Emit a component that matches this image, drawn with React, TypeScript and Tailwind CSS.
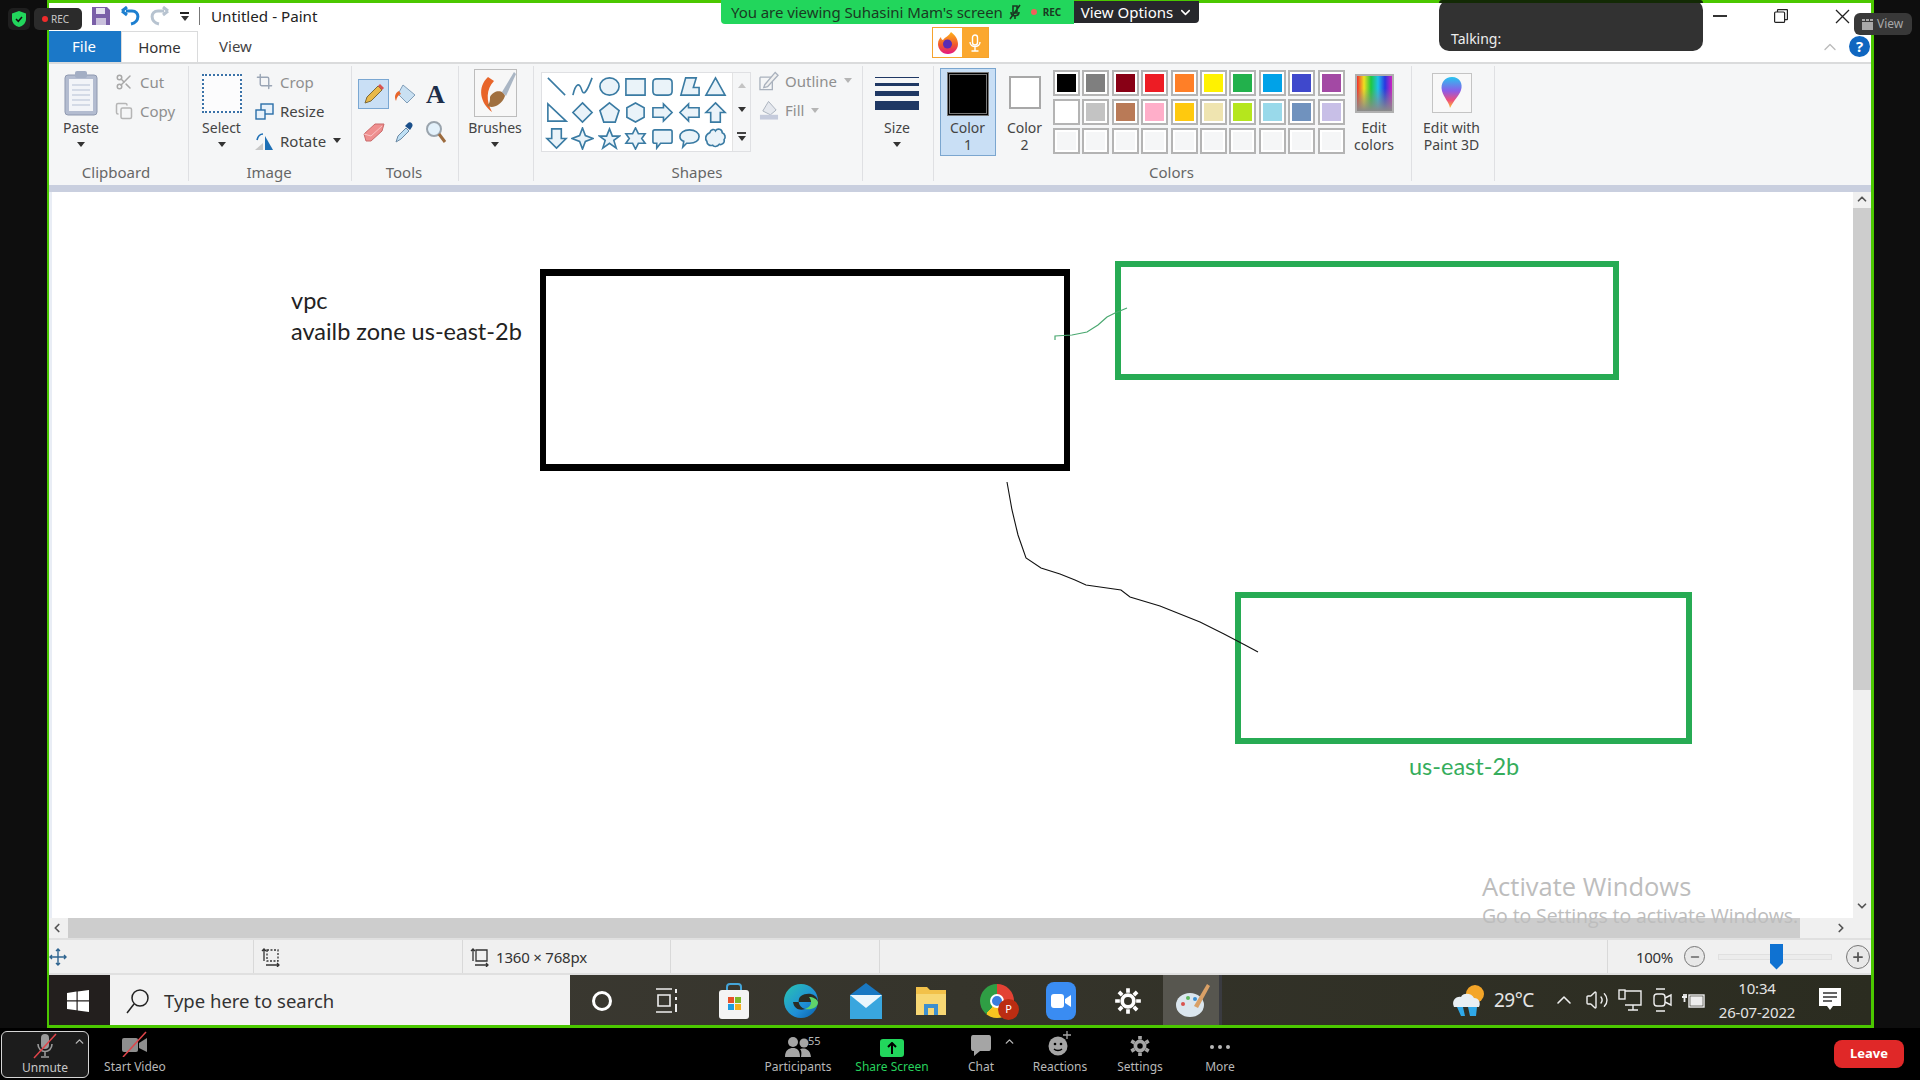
import { ChevronDown, ChevronLeft, ChevronRight, ChevronUp, Copy, Crop, Minus, Plus, Scissors, Volume2 } from 'lucide-react';
import type { ReactNode } from 'react';

const shapePaths = [
  'M3 3L21 21',
  'M2 21C5 8 9 8 11 15S16 19 22 3',
  'M12 3C17.5 3 22 7 22 12S17.5 21 12 21S2 17 2 12S6.5 3 12 3Z',
  'M2 4H22V21H2Z',
  'M6 4H18Q22 4 22 8V17Q22 21 18 21H6Q2 21 2 17V8Q2 4 6 4Z',
  'M3 21L8 3H19L16 13H22V21Z',
  'M12 3L22 21H2Z',
  'M3 3V21H22Z',
  'M12 2L22 12L12 22L2 12Z',
  'M12 2L22 10L18 22H6L2 10Z',
  'M12 2L21 7V17L12 22L3 17V7Z',
  'M2 7H13V3L22 12L13 21V17H2Z',
  'M22 7H11V3L2 12L11 21V17H22Z',
  'M12 2L22 12H17V22H7V12H2Z',
  'M12 22L22 12H17V2H7V12H2Z',
  'M12 1L15 9L23 12L15 15L12 23L9 15L1 12L9 9Z',
  'M12 2L15 9.5H22.5L16.5 14L19 22L12 17L5 22L7.5 14L1.5 9.5H9Z',
  'M12 1L15 7H22L18.5 12L22 17H15L12 23L9 17H2L5.5 12L2 7H9Z',
  'M4 3H20Q22 3 22 5V15Q22 17 20 17H10L6 22V17H4Q2 17 2 15V5Q2 3 4 3Z',
  'M12 3C18 3 22 6 22 10S18 17 12 17C11 17 10 17 9 17L5 21L6 15C3 14 2 12 2 10C2 6 6 3 12 3Z',
  'M6 6C7 2 11 2 12 4C14 1 19 2 19 6C22 7 23 11 21 13C22 17 18 19 16 18C14 21 10 21 9 19C6 20 3 18 3 15C1 13 1 8 6 6Z',
];

const paletteRows = [
  ['#000000', '#7f7f7f', '#880015', '#ed1c24', '#ff7f27', '#fff200', '#22b14c', '#00a2e8', '#3f48cc', '#a349a4'],
  ['#ffffff', '#c3c3c3', '#b97a57', '#ffaec9', '#ffc90e', '#efe4b0', '#b5e61d', '#99d9ea', '#7092be', '#c8bfe7'],
  ['#f5f6f7', '#f5f6f7', '#f5f6f7', '#f5f6f7', '#f5f6f7', '#f5f6f7', '#f5f6f7', '#f5f6f7', '#f5f6f7', '#f5f6f7'],
];

function Caret({ muted }: { muted?: boolean }) {
  return <div className={`mx-auto h-0 w-0 border-x-[4px] border-t-[5px] border-x-transparent ${muted ? 'border-t-[#b5b5b5]' : 'border-t-[#333]'}`} />;
}

function Group({ className, label, labelClass, children }: { className: string; label?: string; labelClass?: string; children: ReactNode }) {
  return (
    <div className={`flex h-full shrink-0 flex-col border-r border-[#dfe0e3] ${className}`}>
      <div className="min-h-0 flex-1">{children}</div>
      <div className={`h-[16px] text-center text-[15px] leading-[15px] text-[#666] ${labelClass ?? 'pr-[2px]'}`}>{label}</div>
    </div>
  );
}

function BigButton({ className, icon, lines, caret }: { className: string; icon: ReactNode; lines: string[]; caret?: boolean }) {
  return (
    <div className={`flex shrink-0 flex-col items-center ${className}`}>
      <div className="flex h-[52px] items-center justify-center">{icon}</div>
      {lines.map((line) => (
        <div key={line} className="h-[17px] text-[14px] leading-[17px] text-[#444]">{line}</div>
      ))}
      {caret && <div className="pt-[6px]"><Caret /></div>}
    </div>
  );
}

function SmallRow({ icon, text, caret, muted }: { icon: ReactNode; text: string; caret?: boolean; muted?: boolean }) {
  return (
    <div className={`flex h-[29.5px] items-center gap-[6px] text-[15px] ${muted ? 'text-[#8f8f8f]' : 'text-[#444]'}`}>
      <span className="flex w-[20px] justify-center">{icon}</span>
      <span>{text}</span>
      {caret && <span className="ml-[1px]"><Caret muted={muted} /></span>}
    </div>
  );
}

function PaintRibbon() {
  return (
    <div className="flex h-[123px] shrink-0 border-t-2 border-[#dadbdc] bg-[#f5f6f7] pt-[2px] pb-[4px]">
      <Group className="w-[140px]" label="Clipboard" labelClass="pr-[5px]">
        <div className="flex pt-[1px]">
          <BigButton
            className="w-[64px]"
            lines={['Paste']}
            caret
            icon={
              <svg width="36" height="46" viewBox="0 0 36 46">
                <rect x="2" y="5" width="32" height="40" rx="3" fill="#b3bcd0" stroke="#8f99b0" />
                <rect x="6" y="9" width="24" height="32" fill="#f2f4f8" />
                <path d="M9 15H27M9 20H27M9 25H27M9 30H27M9 35H27" stroke="#b5c0d4" />
                <rect x="12" y="1" width="12" height="7" rx="2" fill="#a3aec4" />
              </svg>
            }
          />
          <div className="pl-[1px]">
            <SmallRow muted text="Cut" icon={<Scissors size={18} className="text-[#a8a8a8]" />} />
            <SmallRow muted text="Copy" icon={<Copy size={18} className="text-[#b5b5b5]" />} />
          </div>
        </div>
      </Group>
      <Group className="w-[163px]" label="Image">
        <div className="flex pt-[1px]">
          <div className="w-[65px]">
            <BigButton
              className="w-full"
              lines={['Select']}
              caret
              icon={<div className="h-[39px] w-[40px] border-2 border-dotted border-[#3a72a8] bg-white/70" />}
            />
          </div>
          <div>
            <SmallRow muted text="Crop" icon={<Crop size={17} className="text-[#9aa5b5]" />} />
            <SmallRow
              text="Resize"
              icon={
                <svg width="19" height="19" viewBox="0 0 19 19" fill="#e7f1fa" stroke="#2a6ea8" strokeWidth="1.4">
                  <rect x="6" y="2" width="12" height="10" />
                  <rect x="1" y="8" width="9" height="9" />
                </svg>
              }
            />
            <SmallRow
              text="Rotate"
              caret
              icon={
                <svg width="20" height="20" viewBox="0 0 20 20">
                  <path d="M1 19L9 12V19Z" fill="#c7c7c7" />
                  <path d="M11 5L19 19H11Z" fill="#1d6fb5" />
                  <path d="M3 9C4 5 6 3 9 3" stroke="#1d6fb5" strokeWidth="1.6" fill="none" />
                </svg>
              }
            />
          </div>
        </div>
      </Group>
      <Group className="w-[107px]" label="Tools">
        <div className="grid grid-cols-[31px_31px_31px] content-start gap-y-[8px] pl-[6px] pt-[13px]">
          <div className="flex h-[30px] items-center justify-center border border-[#7aa7d2] bg-[#c9dff5]">
            <svg width="22" height="22" viewBox="0 0 22 22">
              <path d="M2 20L4 14L15 3L19 7L8 18Z" fill="#e9b949" stroke="#7d6a3a" />
              <path d="M15 3L17 1L21 5L19 7Z" fill="#d9534f" />
            </svg>
          </div>
          <div className="flex h-[30px] items-center justify-center">
            <svg width="24" height="24" viewBox="0 0 24 24">
              <path d="M10 3L22 13L14 21L5 12Z" fill="#c9e0f2" stroke="#7f9db8" />
              <path d="M6 9C2 11 1 15 3 19C4 15 5 13 8 12Z" fill="#e8652a" />
            </svg>
          </div>
          <div className="flex h-[30px] items-center justify-center font-['Liberation_Serif',serif] text-[26px] font-bold text-[#1d2e4a]">A</div>
          <div className="flex h-[30px] items-center justify-center">
            <svg width="24" height="22" viewBox="0 0 24 22">
              <path d="M2 13L13 3H22L20 10L9 20H4Z" fill="#ef8f8f" stroke="#c96a6a" />
              <path d="M2 13L9 15L20 5" fill="none" stroke="#f8c4c4" />
            </svg>
          </div>
          <div className="flex h-[30px] items-center justify-center">
            <svg width="22" height="24" viewBox="0 0 22 24">
              <path d="M2 22L4 16L12 8L15 11L7 19Z" fill="#bfe0f5" stroke="#6b8aa5" />
              <path d="M11 6L14 3C16 1 20 4 18 7L16 10Z" fill="#1b4f8a" />
            </svg>
          </div>
          <div className="flex h-[30px] items-center justify-center">
            <svg width="22" height="24" viewBox="0 0 22 24" fill="none">
              <circle cx="9" cy="9" r="7" stroke="#9aa4ad" strokeWidth="2" fill="#e3f1fb" />
              <path d="M14 14L20 22" stroke="#9c6b3e" strokeWidth="3" />
            </svg>
          </div>
        </div>
      </Group>
      <Group className="w-[75px]">
        <div className="pt-[1px] pr-[2px]">
          <BigButton
            className="w-full"
            lines={['Brushes']}
            caret
            icon={
              <svg width="43" height="48" viewBox="0 0 43 48">
                <rect x="0.5" y="0.5" width="42" height="47" fill="#f7f7f7" stroke="#bdbdbd" />
                <path d="M14 8C3 18 6 34 18 43C12 32 12 20 20 12Z" fill="#e8652a" />
                <path d="M16 28C20 20 30 21 31 27C27 38 16 40 13 36C16 35 16 31 16 28Z" fill="#a07040" />
                <path d="M28 23L40 3L42 5L32 27Z" fill="#aab6c4" />
              </svg>
            }
          />
        </div>
      </Group>
      <Group className="w-[329px]" label="Shapes">
        <div className="flex pl-[7px] pt-[6px]">
          <div className="flex h-[80px] w-[210px] border border-[#dfe0e3] bg-white">
            <div className="grid w-[190px] grid-cols-7 place-items-center pl-[1px] pr-[3px]">
              {shapePaths.map((d) => (
                <svg key={d} width="23" height="23" viewBox="0 0 24 24" fill={d.length < 12 ? 'none' : '#eaf3f9'} stroke="#3a7ba3" strokeWidth="1.7">
                  <path d={d} fill={d.startsWith('M2 21C') ? 'none' : undefined} />
                </svg>
              ))}
            </div>
            <div className="flex flex-1 flex-col items-center justify-around border-l border-[#e3e3e3] bg-[#f5f6f7] text-[#555]">
              <div className="h-0 w-0 border-x-[4px] border-b-[5px] border-x-transparent border-b-[#c4c4c4]" />
              <Caret />
              <div className="flex flex-col items-center gap-[2px]">
                <div className="h-[2px] w-[9px] bg-[#444]" />
                <Caret />
              </div>
            </div>
          </div>
          <div className="-mt-[6px] pl-[8px]">
            <SmallRow
              muted
              text="Outline"
              caret
              icon={
                <svg width="21" height="21" viewBox="0 0 21 21" fill="none" stroke="#a9b1bd" strokeWidth="1.4">
                  <path d="M1 7H13M1 7V20H14V10" />
                  <path d="M6 15L17 2L20 5L9 17L5 18Z" fill="#f0f0f0" />
                </svg>
              }
            />
            <SmallRow
              muted
              text="Fill"
              caret
              icon={
                <svg width="21" height="21" viewBox="0 0 21 21">
                  <path d="M10 1L18 10L12 15L4 11Z" fill="#e5e8ee" stroke="#a9b1bd" />
                  <rect x="1" y="15" width="19" height="5" fill="#c5cbdc" />
                </svg>
              }
            />
          </div>
        </div>
      </Group>
      <Group className="w-[71px]">
        <div className="flex flex-col items-center pr-[2px] pt-[1px]">
          <div className="flex h-[52px] w-[44px] flex-col justify-center gap-[5px]">
            <div className="h-[1px] bg-[#1f3864]" />
            <div className="h-[3px] bg-[#1f3864]" />
            <div className="h-[5px] bg-[#1f3864]" />
            <div className="h-[9px] bg-[#1f3864]" />
          </div>
          <div className="h-[17px] text-[14px] leading-[17px] text-[#444]">Size</div>
          <div className="pt-[6px]"><Caret /></div>
        </div>
      </Group>
      <Group className="w-[478px]" label="Colors">
        <div className="flex pl-[6px] pt-[2px]">
          <div className="h-[88px] w-[56px] shrink-0 border border-[#7ba6cf] bg-[#c9dff5] pt-[3px] text-center">
            <div className="mx-auto h-[44px] w-[42px] border-[3px] border-double border-[#777] bg-black" />
            <div className="mt-[3px] pr-[1px] text-[14px] leading-[17px] text-[#444]">Color</div>
            <div className="text-[14px] leading-[17px] text-[#444]">1</div>
          </div>
          <div className="w-[57px] shrink-0 pt-[8px] text-center">
            <div className="mx-auto h-[33px] w-[32px] border-2 border-[#a8a8a8] bg-white" />
            <div className="mt-[10px] text-[14px] leading-[17px] text-[#444]">Color</div>
            <div className="text-[14px] leading-[17px] text-[#444]">2</div>
          </div>
          <div className="flex w-[294px] shrink-0 flex-col gap-[3px] pt-[2px]">
            {paletteRows.map((row, r) => (
              <div key={r} className="flex gap-[2.4px]">
                {row.map((c, i) => (
                  <div key={i} className="h-[26px] w-[27px] border-2 border-[#b4b4b4] bg-white p-[2px]">
                    <div className="h-full w-full" style={{ backgroundColor: c }} />
                  </div>
                ))}
              </div>
            ))}
          </div>
          <div className="-ml-[3px] flex w-[60px] shrink-0 flex-col items-center">
            <div className="flex h-[51px] items-center justify-center">
              <div className="relative h-[39px] w-[39px] border-2 border-[#b0b0b0] bg-[linear-gradient(90deg,#f03030,#f0e020,#20c840,#20c0e8,#2838e0,#d020c0)]">
                <div className="absolute inset-0 bg-[linear-gradient(180deg,transparent_35%,#8a8a8a)]" />
              </div>
            </div>
            <div className="h-[17px] text-[14px] leading-[17px] text-[#444]">Edit</div>
            <div className="h-[17px] text-[14px] leading-[17px] text-[#444]">colors</div>
          </div>
        </div>
      </Group>
      <Group className="w-[83px]">
        <div className="pr-[3px] pt-[1px]">
          <BigButton
            className="w-full"
            lines={['Edit with', 'Paint 3D']}
            icon={
              <svg width="40" height="40" viewBox="0 0 40 40">
                <defs>
                  <linearGradient id="p3d" x1="0" y1="0" x2="0" y2="1">
                    <stop offset="0" stopColor="#27c5f0" />
                    <stop offset="0.45" stopColor="#8b5ce8" />
                    <stop offset="0.75" stopColor="#ee4f7c" />
                    <stop offset="1" stopColor="#fbc02d" />
                  </linearGradient>
                </defs>
                <rect x="0.5" y="0.5" width="39" height="39" fill="#f8f8f8" stroke="#c4c4c4" />
                <path d="M20 4C28 4 31 11 29 17C27 23 22 27 18 35C17 29 12 25 10 18C8 10 13 4 20 4Z" fill="url(#p3d)" />
              </svg>
            }
          />
        </div>
      </Group>
    </div>
  );
}

function Canvas() {
  return (
    <div className="relative flex h-[746px] shrink-0 flex-col overflow-hidden bg-white">
      <div className="flex min-h-0 flex-1 justify-end">
        <div className="flex w-[18px] flex-col bg-[#f0f0f0] text-[#555]">
          <div className="flex h-[16px] items-start justify-center"><ChevronUp size={14} strokeWidth={3} /></div>
          <div className="h-[482px] bg-[#cdcdcd]" />
          <div className="flex flex-1 items-end justify-center pb-[5px]"><ChevronDown size={14} strokeWidth={3} /></div>
        </div>
      </div>
      <div className="flex h-[20px] shrink-0 items-center bg-[#f0f0f0] text-[#555]">
        <div className="flex w-[19px] justify-center pr-[3px]"><ChevronLeft size={14} strokeWidth={3} /></div>
        <div className="h-full w-[1732px] bg-[#cdcdcd]" />
        <div className="flex flex-1 justify-center pl-[10px]"><ChevronRight size={14} strokeWidth={3} /></div>
      </div>

      {/* drawing on the paint canvas */}
      <div className="absolute left-0 top-0 h-[726px] w-[3px] bg-[#e9edf5]" />
      <div className="absolute left-[242px] top-[93px] font-['Lato',sans-serif] text-[23.5px] leading-[31px] text-[#222]">
        <div>vpc</div>
        <div>availb zone us-east-2b</div>
      </div>
      <div className="absolute left-[491px] top-[77px] h-[202px] w-[530px] border-x-[6px] border-y-[7px] border-black" />
      <div className="absolute left-[1066px] top-[69px] h-[119px] w-[504px] border-[6px] border-[#27ab54]" />
      <div className="absolute left-[1186px] top-[400px] h-[152px] w-[457px] border-[6px] border-[#27ab54]" />
      <div className="absolute left-[1360px] top-[559px] font-['Lato',sans-serif] text-[23.5px] leading-[30px] text-[#35ad5c]">us-east-2b</div>
      <svg className="absolute left-0 top-0" width="1822" height="746" viewBox="49 192 1822 746" fill="none">
        <polyline
          points="1007,482 1012,510 1018,535 1026,558 1041,568 1060,574 1075,580 1086,585 1121,590 1130,597 1160,606 1175,612 1200,622 1224,634 1245,645 1258,652"
          stroke="#111"
          strokeWidth="1.1"
        />
        <polyline
          points="1055,340 1055,336 1072,335 1087,332 1098,325 1107,317 1115,313 1127,308"
          stroke="#4aa870"
          strokeWidth="1.2"
        />
      </svg>

      {/* activation watermark */}
      <div className="absolute left-[1433px] top-[676px] font-['Open_Sans',sans-serif] text-[#bdbdbd]">
        <div className="text-[25.5px] leading-[36px]">Activate Windows</div>
        <div className="text-[19.5px] leading-[24px] tracking-[-0.1px]">Go to Settings to activate Windows.</div>
      </div>
    </div>
  );
}

function StatusBar() {
  return (
    <div className="flex h-[37px] shrink-0 items-center border-y-2 border-[#e0e0e0] bg-[#f0f0f0] text-[15px] text-[#333]">
      <div className="flex h-full w-[205px] items-center border-r border-[#d9d9d9]">
        <svg width="18" height="18" viewBox="0 0 18 18" fill="none" stroke="#2e6490" strokeWidth="1.4">
          <path d="M9 1V17M1 9H17M7 3L9 1L11 3M7 15L9 17L11 15M3 7L1 9L3 11M15 7L17 9L15 11" />
        </svg>
      </div>
      <div className="flex h-full w-[209px] items-center border-r border-[#d9d9d9] pl-[7px]">
        <svg width="20" height="20" viewBox="0 0 20 20" fill="none" stroke="#333" strokeWidth="1.3">
          <path d="M6 3H17V14H6Z" strokeDasharray="2 1.5" />
          <path d="M3 2V14M1 4L3 2L5 4M5 18H18M16 16L18 18L16 20" />
        </svg>
      </div>
      <div className="flex h-full w-[208px] items-center gap-[6px] border-r border-[#d9d9d9] pl-[7px]">
        <svg width="20" height="20" viewBox="0 0 20 20" fill="none" stroke="#333" strokeWidth="1.3">
          <path d="M6 3H17V14H6Z" />
          <path d="M3 2V14M1 4L3 2L5 4M5 18H18M16 16L18 18L16 20" />
        </svg>
        <span className="pt-[1px] text-[15px] tracking-[-0.2px]">1360 × 768px</span>
      </div>
      <div className="h-full w-[209px] border-r border-[#d9d9d9]" />
      <div className="h-full w-[728px] border-r border-[#d9d9d9]" />
      <div className="flex h-full flex-1 items-center">
        <span className="ml-[28px] w-[40px] pt-[1px] text-[15px] tracking-[-0.3px]">100%</span>
        <div className="ml-[8px] flex h-[21px] w-[21px] items-center justify-center rounded-full border border-[#777] bg-[#e8e8e8]">
          <Minus size={12} strokeWidth={3} className="text-[#666]" />
        </div>
        <div className="relative ml-[13px] h-[6px] w-[114px] border border-[#e0e0e0] bg-[#ececec]">
          <div className="absolute left-[51px] top-[-11px] h-[26px] w-[13px] bg-[#0f72d2] [clip-path:polygon(0_0,100%_0,100%_75%,50%_100%,0_75%)]" />
        </div>
        <div className="ml-[14px] flex h-[24px] w-[24px] items-center justify-center rounded-full border border-[#777] bg-[#e8e8e8]">
          <Plus size={14} strokeWidth={3} className="text-[#555]" />
        </div>
      </div>
    </div>
  );
}

function TaskIcon({ className, children }: { className: string; children: ReactNode }) {
  return <div className={`flex h-full shrink-0 items-center justify-center pt-[1px] ${className}`}>{children}</div>;
}

function Taskbar() {
  return (
    <div className="flex h-[50px] shrink-0 items-center bg-[linear-gradient(90deg,#3f3c36,#2b2c20)] text-white">
      <TaskIcon className="w-[61px] bg-[#231f1e] pr-[4px]">
        <svg width="22" height="22" viewBox="0 0 22 22" fill="#fff">
          <path d="M0 3L9.5 1.6V10.3H0ZM10.7 1.4L22 0V10.3H10.7ZM0 11.5H9.5V20.3L0 19ZM10.7 11.5H22V22L10.7 20.5Z" />
        </svg>
      </TaskIcon>
      <div className="flex h-full w-[460px] shrink-0 items-center gap-[14px] bg-[#f2f2f2] pl-[16px] pt-[1px] text-[#333]">
        <svg width="24" height="26" viewBox="0 0 24 26" fill="none" stroke="#222" strokeWidth="1.5">
          <circle cx="14" cy="10" r="8" />
          <path d="M8 16L1 25" />
        </svg>
        <span className="text-[18.5px]">Type here to search</span>
      </div>
      <TaskIcon className="ml-[12px] w-[40px]"><div className="h-[20px] w-[20px] rounded-full border-[3px] border-white" /></TaskIcon>
      <TaskIcon className="ml-[25px] w-[40px]">
        <svg width="24" height="26" viewBox="0 0 24 26" fill="none" stroke="#eee" strokeWidth="1.6">
          <path d="M1 1H17M3 7H15V18H3ZM1 24H17" />
          <path d="M21 1V5M21 9V12M21 16V24" strokeWidth="2" />
        </svg>
      </TaskIcon>
      <TaskIcon className="ml-[27px] w-[40px]">
        <svg width="32" height="38" viewBox="0 0 32 38">
          <path d="M9 9V5Q9 2 12 2H20Q23 2 23 5V9" fill="none" stroke="#45a5d8" strokeWidth="2" />
          <rect x="1" y="8" width="30" height="29" rx="3" fill="#f4f4f4" />
          <rect x="10" y="15" width="6" height="6" fill="#e8512a" />
          <rect x="17" y="15" width="6" height="6" fill="#7fb82a" />
          <rect x="10" y="22" width="6" height="6" fill="#1f9de0" />
          <rect x="17" y="22" width="6" height="6" fill="#f6b01d" />
        </svg>
      </TaskIcon>
      <TaskIcon className="ml-[27px] w-[40px]">
        <svg width="36" height="38" viewBox="0 0 36 38">
          <defs>
            <linearGradient id="edge" x1="0" y1="0" x2="1" y2="1">
              <stop offset="0" stopColor="#2ac4b0" />
              <stop offset="0.6" stopColor="#1f8fd8" />
              <stop offset="1" stopColor="#0a5fa8" />
            </linearGradient>
          </defs>
          <circle cx="18" cy="19" r="17" fill="url(#edge)" />
          <path d="M35 20C34 11 24 10 18 14C14 17 15 25 22 27C17 29 11 27 10 20" fill="#2b2c25" />
          <path d="M35 20C35 26 28 28 22 27C28 25 30 20 26 15C30 15 34 17 35 20Z" fill="#5fd36a" />
        </svg>
      </TaskIcon>
      <TaskIcon className="ml-[25px] w-[40px]">
        <svg width="34" height="38" viewBox="0 0 34 38">
          <path d="M17 1L33 13H1Z" fill="#1978c2" />
          <rect x="1" y="13" width="32" height="24" fill="#39a6de" />
          <path d="M1 13L17 26L33 13" fill="#eaf6fc" />
        </svg>
      </TaskIcon>
      <TaskIcon className="ml-[25px] w-[40px]">
        <svg width="30" height="30" viewBox="0 0 30 30">
          <path d="M0 1H11L14 4H30V29H0Z" fill="#f2c14a" />
          <rect x="0" y="8" width="30" height="21" fill="#f7d774" />
          <path d="M8 18H22V29H18V22H12V29H8Z" fill="#3c8fcf" />
        </svg>
      </TaskIcon>
      <TaskIcon className="relative ml-[26px] w-[40px]">
        <div className="relative h-[34px] w-[34px] rounded-full bg-[conic-gradient(#e34234_0deg_120deg,#f7c520_120deg_220deg,#2f9e44_220deg_360deg)]">
          <div className="absolute left-[10px] top-[10px] h-[14px] w-[14px] rounded-full border-2 border-white bg-[#3b7ddd]" />
        </div>
        <div className="absolute left-[21px] top-[24px] flex h-[21px] w-[21px] items-center justify-center rounded-full bg-[#bb2d12] text-[11px] text-white">P</div>
      </TaskIcon>
      <TaskIcon className="ml-[24px] w-[40px]">
        <div className="flex h-[38px] w-[30px] items-center justify-center rounded-[8px] bg-[#3a8cf2]">
          <svg width="20" height="14" viewBox="0 0 20 14" fill="#fff">
            <rect width="13" height="14" rx="3" />
            <path d="M14 5L20 1V13L14 9Z" />
          </svg>
        </div>
      </TaskIcon>
      <TaskIcon className="ml-[27px] w-[40px]">
        <svg width="28" height="28" viewBox="0 0 24 24" fill="none" stroke="#fff" strokeWidth="3.2">
          <circle cx="12" cy="12" r="5" />
          <path d="M12 1V5M12 19V23M1 12H5M19 12H23M4.2 4.2L7 7M17 17L19.8 19.8M4.2 19.8L7 17M17 7L19.8 4.2" />
        </svg>
      </TaskIcon>
      <TaskIcon className="ml-[15px] w-[59px] border-r-[3px] border-[#3a3b40] bg-[#57564f] pl-[4px]">
        <svg width="36" height="38" viewBox="0 0 36 38">
          <ellipse cx="15" cy="23" rx="14" ry="12" fill="#dbe6ee" />
          <circle cx="8" cy="22" r="2" fill="#d9534f" />
          <circle cx="13" cy="16" r="2" fill="#5cb85c" />
          <circle cx="20" cy="17" r="2" fill="#3b8ed0" />
          <path d="M19 24L32 2L35 4L23 26Z" fill="#d9a066" />
        </svg>
      </TaskIcon>
      <div className="ml-[228px] flex h-full items-center">
        <svg width="36" height="34" viewBox="0 0 36 34">
          <circle cx="25" cy="11" r="9" fill="#f4a528" />
          <path d="M4 24C1 18 6 13 11 14C13 9 22 10 24 15C29 15 31 20 29 24Z" fill="#e8eef3" />
          <path d="M7 24L11 33H15L13 24ZM18 24L20 33H26L27 24Z" fill="#2fa8e8" />
        </svg>
        <span className="ml-[8px] w-[42px] text-[19px] tracking-[-0.5px] text-[#e4e4e4]">29°C</span>
        <ChevronUp size={24} strokeWidth={1.6} className="ml-[16px] text-[#eee]" />
        <Volume2 size={24} strokeWidth={1.4} className="ml-[9px] text-[#eee]" />
        <svg className="ml-[9px]" width="24" height="24" viewBox="0 0 24 24" fill="none" stroke="#eee" strokeWidth="1.4">
          <path d="M7 3H23V17H7M15 17V22M10 22H20" />
          <rect x="1" y="2" width="6" height="9" />
        </svg>
        <svg className="ml-[9px]" width="22" height="26" viewBox="0 0 22 26" fill="none" stroke="#eee" strokeWidth="1.4">
          <rect x="3" y="7" width="11" height="12" rx="3" />
          <path d="M14 11L20 8V18L14 15M5 2H14M5 24H14" />
        </svg>
        <svg className="ml-[8px]" width="24" height="20" viewBox="0 0 24 20" fill="none" stroke="#eee" strokeWidth="1.4">
          <rect x="8" y="5" width="15" height="12" />
          <rect x="10" y="7" width="11" height="8" fill="#eee" />
          <path d="M1 7H6M3 4V7M5 4V7M3.5 7V12" strokeWidth="1.8" />
        </svg>
        <div className="ml-[8px] w-[88px] text-center text-[15px] leading-[24px] tracking-[-0.2px] text-[#e4e4e4]">
          <div>10:34</div>
          <div>26-07-2022</div>
        </div>
        <svg className="ml-[18px]" width="22" height="24" viewBox="0 0 22 24" fill="#fff">
          <path d="M0 0H22V18H14L11 22L8 18H0Z" />
          <path d="M4 5H18M4 9H18M4 13H13" stroke="#333" strokeWidth="1.3" />
        </svg>
      </div>
    </div>
  );
}

function ToolCell({ className, label, labelClass, children }: { className: string; label: string; labelClass?: string; children: ReactNode }) {
  return (
    <div className={`relative flex h-full shrink-0 flex-col items-center ${className}`}>
      <div className="flex h-[29px] items-end justify-center">{children}</div>
      <div className={`mt-[2px] text-[12px] leading-[16px] ${labelClass ?? 'text-[#b8b8b8]'}`}>{label}</div>
    </div>
  );
}

function MeetingToolbar() {
  return (
    <div className="flex h-[52px] shrink-0 items-center bg-black">
      <div className="relative ml-[1px] flex h-[47px] w-[88px] shrink-0 flex-col items-center rounded-[6px] border border-[#d5d5d5] bg-[#1c1c1c]">
        <svg className="mt-[1px]" width="28" height="26" viewBox="0 0 28 26" fill="none">
          <rect x="10" y="1" width="8" height="15" rx="4" fill="#9a9a9a" />
          <path d="M7 11C7 21 21 21 21 11M14 19V23M10 24H18" stroke="#9a9a9a" strokeWidth="1.6" />
          <path d="M3 25L25 1" stroke="#e0454a" strokeWidth="1.5" />
        </svg>
        <span className="mt-[1px] text-[12px] leading-[16px] text-[#c8c8c8]">Unmute</span>
        <ChevronUp size={13} strokeWidth={2.5} className="absolute right-[2px] top-[3px] text-[#b8b8b8]" />
      </div>
      <ToolCell className="ml-[11px] w-[70px]" label="Start Video">
        <svg width="28" height="26" viewBox="0 0 28 26" fill="none">
          <rect x="1" y="7" width="16" height="14" rx="2" fill="#8e8e8e" />
          <path d="M18 12L26 7V21L18 17Z" fill="#8e8e8e" />
          <path d="M2 26L25 1" stroke="#e0454a" strokeWidth="1.5" />
        </svg>
      </ToolCell>
      <ToolCell className="ml-[584px] w-[88px]" label="Participants">
        <svg width="26" height="20" viewBox="0 0 26 20" fill="#a5a5a5">
          <circle cx="8" cy="5" r="5" />
          <circle cx="19" cy="6" r="4.5" />
          <path d="M0 20C0 13 4 11 8 11S15 13 15 20ZM16 20C17 15 16 13 15 12C17 11 25 10 26 20Z" />
        </svg>
        <span className="absolute left-[54px] top-[5px] text-[11px] text-[#b8b8b8]">55</span>
      </ToolCell>
      <ToolCell className="w-[100px]" label="Share Screen" labelClass="text-[#26d15c]">
        <div className="flex h-[18px] w-[24px] items-center justify-center rounded-[3px] bg-[#22d65c]">
          <svg width="10" height="12" viewBox="0 0 10 12" fill="none" stroke="#000" strokeWidth="2">
            <path d="M5 12V2M1 5L5 1L9 5" />
          </svg>
        </div>
      </ToolCell>
      <ToolCell className="w-[78px]" label="Chat">
        <svg width="22" height="22" viewBox="0 0 22 22" fill="#a5a5a5">
          <path d="M3 0H19Q21 0 21 3V13Q21 16 19 16H10L4 21V16H3Q1 16 1 13V3Q1 0 3 0Z" />
        </svg>
        <ChevronUp size={13} strokeWidth={2.5} className="absolute right-[4px] top-[7px] text-[#b8b8b8]" />
      </ToolCell>
      <ToolCell className="w-[80px]" label="Reactions">
        <svg width="24" height="26" viewBox="0 0 24 26">
          <circle cx="10" cy="15" r="9.5" fill="#a5a5a5" />
          <circle cx="7" cy="13" r="1.3" fill="#000" />
          <circle cx="13" cy="13" r="1.3" fill="#000" />
          <path d="M6 18C8 20 12 20 14 18" stroke="#000" strokeWidth="1.3" fill="none" />
          <path d="M19 0V8M15 4H23" stroke="#a5a5a5" strokeWidth="1.3" />
        </svg>
      </ToolCell>
      <ToolCell className="w-[80px]" label="Settings">
        <svg width="22" height="22" viewBox="0 0 24 24" fill="none" stroke="#a5a5a5" strokeWidth="4">
          <circle cx="12" cy="12" r="5" />
          <path d="M12 1V5M12 19V23M2.5 6.5L6 8.5M18 15.5L21.5 17.5M2.5 17.5L6 15.5M18 8.5L21.5 6.5" />
        </svg>
      </ToolCell>
      <ToolCell className="w-[80px]" label="More">
        <div className="flex h-[20px] items-center gap-[4px]">
          <div className="h-[4px] w-[4px] rounded-full bg-[#b8b8b8]" />
          <div className="h-[4px] w-[4px] rounded-full bg-[#b8b8b8]" />
          <div className="h-[4px] w-[4px] rounded-full bg-[#b8b8b8]" />
        </div>
      </ToolCell>
      <div className="ml-auto mr-[16px] flex h-[28px] w-[70px] items-center justify-center rounded-[8px] bg-[#e02828] text-[13px] font-bold text-white">Leave</div>
    </div>
  );
}

function Overlays() {
  return (
    <>
      {/* meeting status chips */}
      <div className="absolute left-[8px] top-[8px] flex h-[22px] w-[22px] items-center justify-center rounded-[5px] bg-[#1f1f1f]">
        <svg width="14" height="16" viewBox="0 0 14 16">
          <path d="M7 0L14 2.5V8C14 12 11 15 7 16C3 15 0 12 0 8V2.5Z" fill="#22d65c" />
          <path d="M4 8L6.3 10.3L10 6" stroke="#111" strokeWidth="1.5" fill="none" />
        </svg>
      </div>
      <div className="absolute left-[34px] top-[8px] flex h-[22px] w-[48px] items-center gap-[3px] rounded-[5px] bg-[#2b2b2b] pl-[8px] text-[10px] text-[#c8c8c8]">
        <div className="h-[6px] w-[6px] rounded-full bg-[#f02b2b]" />
        REC
      </div>
      <div className="absolute left-[721px] top-0 flex h-[24px] w-[353px] items-center rounded-bl-[4px] bg-[#22d65c] pl-[10px] text-[15px] tracking-[-0.06px] text-[#1a3a22]">
        <span>You are viewing Suhasini Mam's screen</span>
        <svg className="ml-[5px]" width="14" height="16" viewBox="0 0 14 16" fill="none" stroke="#1a3a22" strokeWidth="1.6">
          <path d="M5 2H9V9H5ZM3 8C3 13 11 13 11 8M7 12V15M2 15L12 1" />
        </svg>
        <div className="ml-[9px] h-[6px] w-[6px] rounded-full bg-[#f0605a]" />
        <span className="ml-[6px] text-[10px] font-bold">REC</span>
      </div>
      <div className="absolute left-[1074px] top-[1px] flex h-[22px] w-[125px] items-center justify-center gap-[5px] rounded-br-[4px] bg-[#27282c] pl-[1px] text-[15px] text-white">
        View Options
        <ChevronDown size={15} strokeWidth={2.5} />
      </div>
      <div className="absolute left-[932px] top-[27px] flex h-[31px] w-[57px] border border-[#f5a32e]">
        <div className="flex w-[29px] items-center justify-center bg-white">
          <svg width="22" height="24" viewBox="0 0 22 24">
            <defs>
              <linearGradient id="ff" x1="0.5" y1="0" x2="0.5" y2="1">
                <stop offset="0" stopColor="#ffb31a" />
                <stop offset="0.6" stopColor="#f0562e" />
                <stop offset="1" stopColor="#e31587" />
              </linearGradient>
            </defs>
            <path d="M14 1C18 4 21 8 21 13C21 19 16 23 11 23C5 23 1 18 1 13C1 9 3 7 4 6C4 8 5 9 6 9C8 6 12 5 14 1Z" fill="url(#ff)" />
            <circle cx="10.5" cy="13" r="4.5" fill="#5b2bb5" />
          </svg>
        </div>
        <div className="flex flex-1 items-center justify-center bg-[#fba82f]">
          <svg width="12" height="18" viewBox="0 0 12 18" fill="none" stroke="#fff" strokeWidth="1.4">
            <rect x="3.5" y="1" width="5" height="10" rx="2.5" />
            <path d="M1 8C1 14 11 14 11 8M6 13V17M2.5 17H9.5" />
          </svg>
        </div>
      </div>
      <div className="absolute left-[1439px] top-0 h-[51px] w-[264px] rounded-[10px] bg-[#323232] pl-[12px] pt-[29px] text-[14px] leading-[20px] text-[#eee]">
        <div className="absolute inset-x-0 top-0 h-[3px] rounded-t-[10px] bg-[#132a05]" />
        Talking:
      </div>
      <div className="absolute left-[1854px] top-[13px] flex h-[22px] w-[58px] items-center gap-[4px] rounded-[6px] bg-[#383838] pl-[8px] text-[12px] text-[#a8a8a8]">
        <svg width="11" height="11" viewBox="0 0 11 11" fill="#a8a8a8">
          <path d="M0 3H11V11H0ZM0 0H3V2H0ZM4 0H7V2H4ZM8 0H11V2H8Z" />
        </svg>
        View
      </div>
    </>
  );
}

export default function App() {
  return (
    <div className="relative h-[1080px] w-[1920px] overflow-hidden bg-black font-['Noto_Sans',sans-serif]">
      <div className="flex h-[1028px] bg-[#0e0e0e]">
        <div className="flex w-[1827px] ml-[47px] flex-col border-[3px] border-l-2 border-[#4bc800] bg-white">
          <div className="flex h-[28px] shrink-0 items-center pb-[2px]">
            <svg className="ml-[43px]" width="18" height="18" viewBox="0 0 18 18">
              <path d="M0 0H15L18 3V18H0Z" fill="#7a5fa8" />
              <rect x="4" y="1" width="9" height="6" fill="#e5e0f0" />
              <rect x="4" y="11" width="10" height="7" fill="#c9c0dc" />
            </svg>
            <svg className="ml-[10px]" width="20" height="20" viewBox="0 0 20 20" fill="none" stroke="#1d7fd0" strokeWidth="3">
              <path d="M6 5H12C20 5 20 16 11 18M2 5L7 1M2 5L7 9" />
            </svg>
            <svg className="ml-[10px]" width="20" height="20" viewBox="0 0 20 20" fill="none" stroke="#b7c3d0" strokeWidth="3">
              <path d="M14 5H8C0 5 0 16 9 18M18 5L13 1M18 5L13 9" />
            </svg>
            <div className="ml-[10px] flex flex-col items-center gap-[2px]">
              <div className="h-[2px] w-[9px] bg-[#222]" />
              <Caret />
            </div>
            <div className="ml-[10px] h-[18px] w-px bg-[#777]" />
            <span className="ml-[11px] text-[15.2px] text-[#222]">Untitled - Paint</span>
            <div className="ml-auto flex items-center text-[#222]">
              <div className="flex w-[60px] justify-center"><div className="h-[1.5px] w-[14px] bg-[#333]" /></div>
              <div className="flex w-[61px] justify-center">
                <svg width="14" height="14" viewBox="0 0 14 14" fill="none" stroke="#222" strokeWidth="1.2">
                  <rect x="0.6" y="3" width="10" height="10.4" rx="1" />
                  <path d="M3.5 3V1.2Q3.5 0.6 4 0.6H13Q13.4 0.6 13.4 1V10Q13.4 10.6 13 10.6H10.6" />
                </svg>
              </div>
              <div className="ml-[23px] mr-[21px] flex w-[16px] justify-center">
                <svg width="15" height="15" viewBox="0 0 15 15" stroke="#222" strokeWidth="1.3">
                  <path d="M1 1L14 14M14 1L1 14" />
                </svg>
              </div>
            </div>
          </div>
          <div className="flex h-[31px] shrink-0 items-stretch text-[15px]">
            <div className="flex w-[72px] items-center justify-center bg-[#1b78c8] pr-[2px] text-white">File</div>
            <div className="flex w-[77px] items-center justify-center border-x border-t border-[#dadbdc] text-[#333]">Home</div>
            <div className="flex w-[75px] items-center justify-center text-[#444]">View</div>
            <div className="ml-auto mr-[1px] flex items-center gap-[9px]">
              <ChevronUp size={20} strokeWidth={1.6} className="text-[#bbb]" />
              <div className="flex h-[21px] w-[21px] items-center justify-center rounded-full bg-[#0f66c0] text-[15px] font-bold text-white">?</div>
            </div>
          </div>
          <PaintRibbon />
          <div className="h-[7px] shrink-0 bg-[#c9cfdf]" />
          <Canvas />
          <StatusBar />
          <Taskbar />
        </div>
      </div>
      <MeetingToolbar />
      <Overlays />
    </div>
  );
}
